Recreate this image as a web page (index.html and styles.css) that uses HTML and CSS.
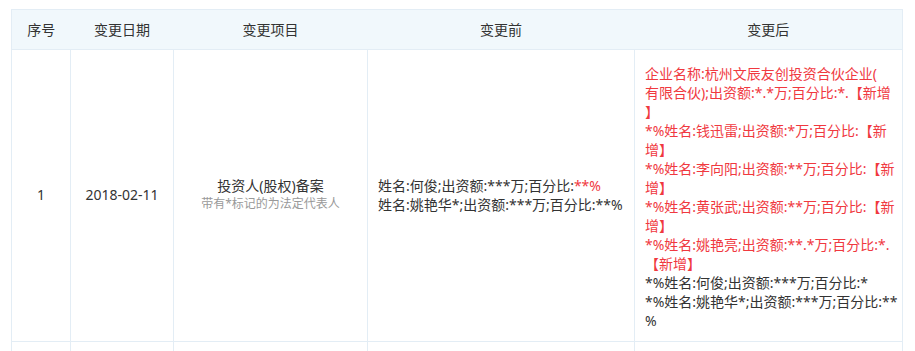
FILE: index.html
```html
<!DOCTYPE html>
<html lang="zh-CN">
<head>
<meta charset="utf-8">
<title>变更记录</title>
<link rel="stylesheet" href="styles.css">
</head>
<body>
<table class="change-table">
  <colgroup>
    <col class="c-no">
    <col class="c-date">
    <col class="c-item">
    <col class="c-before">
    <col class="c-after">
  </colgroup>
  <thead>
    <tr>
      <th>序号</th>
      <th>变更日期</th>
      <th>变更项目</th>
      <th>变更前</th>
      <th>变更后</th>
    </tr>
  </thead>
  <tbody>
    <tr>
      <td class="center">1</td>
      <td class="center">2018-02-11</td>
      <td class="center">
        <div class="item-title">投资人(股权)备案</div>
        <div class="item-note">带有*标记的为法定代表人</div>
      </td>
      <td class="before">
        <div class="line">姓名:何俊;出资额:***万;百分比:<span class="red">**%</span></div>
        <div class="line">姓名:姚艳华*;出资额:***万;百分比:**%</div>
      </td>
      <td class="after">
        <div class="red">
          <span class="line">企业名称:杭州文辰友创投资合伙企业(</span>
          <span class="line">有限合伙);出资额:*.*万;百分比:*.【新增</span>
          <span class="line">】</span>
        </div>
        <div class="red">
          <span class="line">*%姓名:钱迅雷;出资额:*万;百分比:【新</span>
          <span class="line">增】</span>
        </div>
        <div class="red">
          <span class="line">*%姓名:李向阳;出资额:**万;百分比:【新</span>
          <span class="line">增】</span>
        </div>
        <div class="red">
          <span class="line">*%姓名:黄张武;出资额:**万;百分比:【新</span>
          <span class="line">增】</span>
        </div>
        <div class="red">
          <span class="line">*%姓名:姚艳亮;出资额:**.*万;百分比:*.</span>
          <span class="line">【新增】</span>
        </div>
        <div>
          <span class="line">*%姓名:何俊;出资额:***万;百分比:*</span>
        </div>
        <div>
          <span class="line">*%姓名:姚艳华*;出资额:***万;百分比:**</span>
          <span class="line">%</span>
        </div>
      </td>
    </tr>
    <tr class="empty">
      <td></td><td></td><td></td><td></td><td></td>
    </tr>
  </tbody>
</table>
</body>
</html>
```

FILE: styles.css
```css
html, body {
  margin: 0;
  padding: 0;
  background: #ffffff;
}

body {
  font-family: "Noto Sans", "Noto Sans CJK SC", sans-serif;
  font-size: 14px;
  color: #333333;
}

.change-table {
  margin: 9px 13px 0 11px;
  width: 891px;
  border-collapse: collapse;
  table-layout: fixed;
}

.c-no { width: 59px; }
.c-date { width: 103px; }
.c-item { width: 194px; }
.c-before { width: 267px; }
.c-after { width: 268px; }

.change-table th {
  background: #f1f8fc;
  border-top: 1px solid #e3edf5;
  border-bottom: 1px solid #e3edf5;
  height: 39px;
  padding: 0;
  font-weight: normal;
  text-align: center;
  line-height: 19px;
  color: #333333;
}

.change-table th:first-child {
  border-left: 1px solid #e3edf5;
}

.change-table th:last-child {
  border-right: 1px solid #e3edf5;
}

.change-table td {
  border: 1px solid #e3edf5;
  line-height: 19px;
  vertical-align: middle;
  padding: 14px 10px 11px 10px;
}

.change-table td.center {
  text-align: center;
  padding: 11px 10px 14px 10px;
}

.change-table td.before {
  padding: 12px 10px 13px 10px;
}

.line {
  display: block;
  white-space: nowrap;
}

.item-title {
  color: #333333;
}

.item-note {
  font-size: 12px;
  line-height: 17px;
  color: #999999;
}

.red {
  color: #f0393f;
}

.empty td {
  height: 30px;
  padding: 0;
}
```
